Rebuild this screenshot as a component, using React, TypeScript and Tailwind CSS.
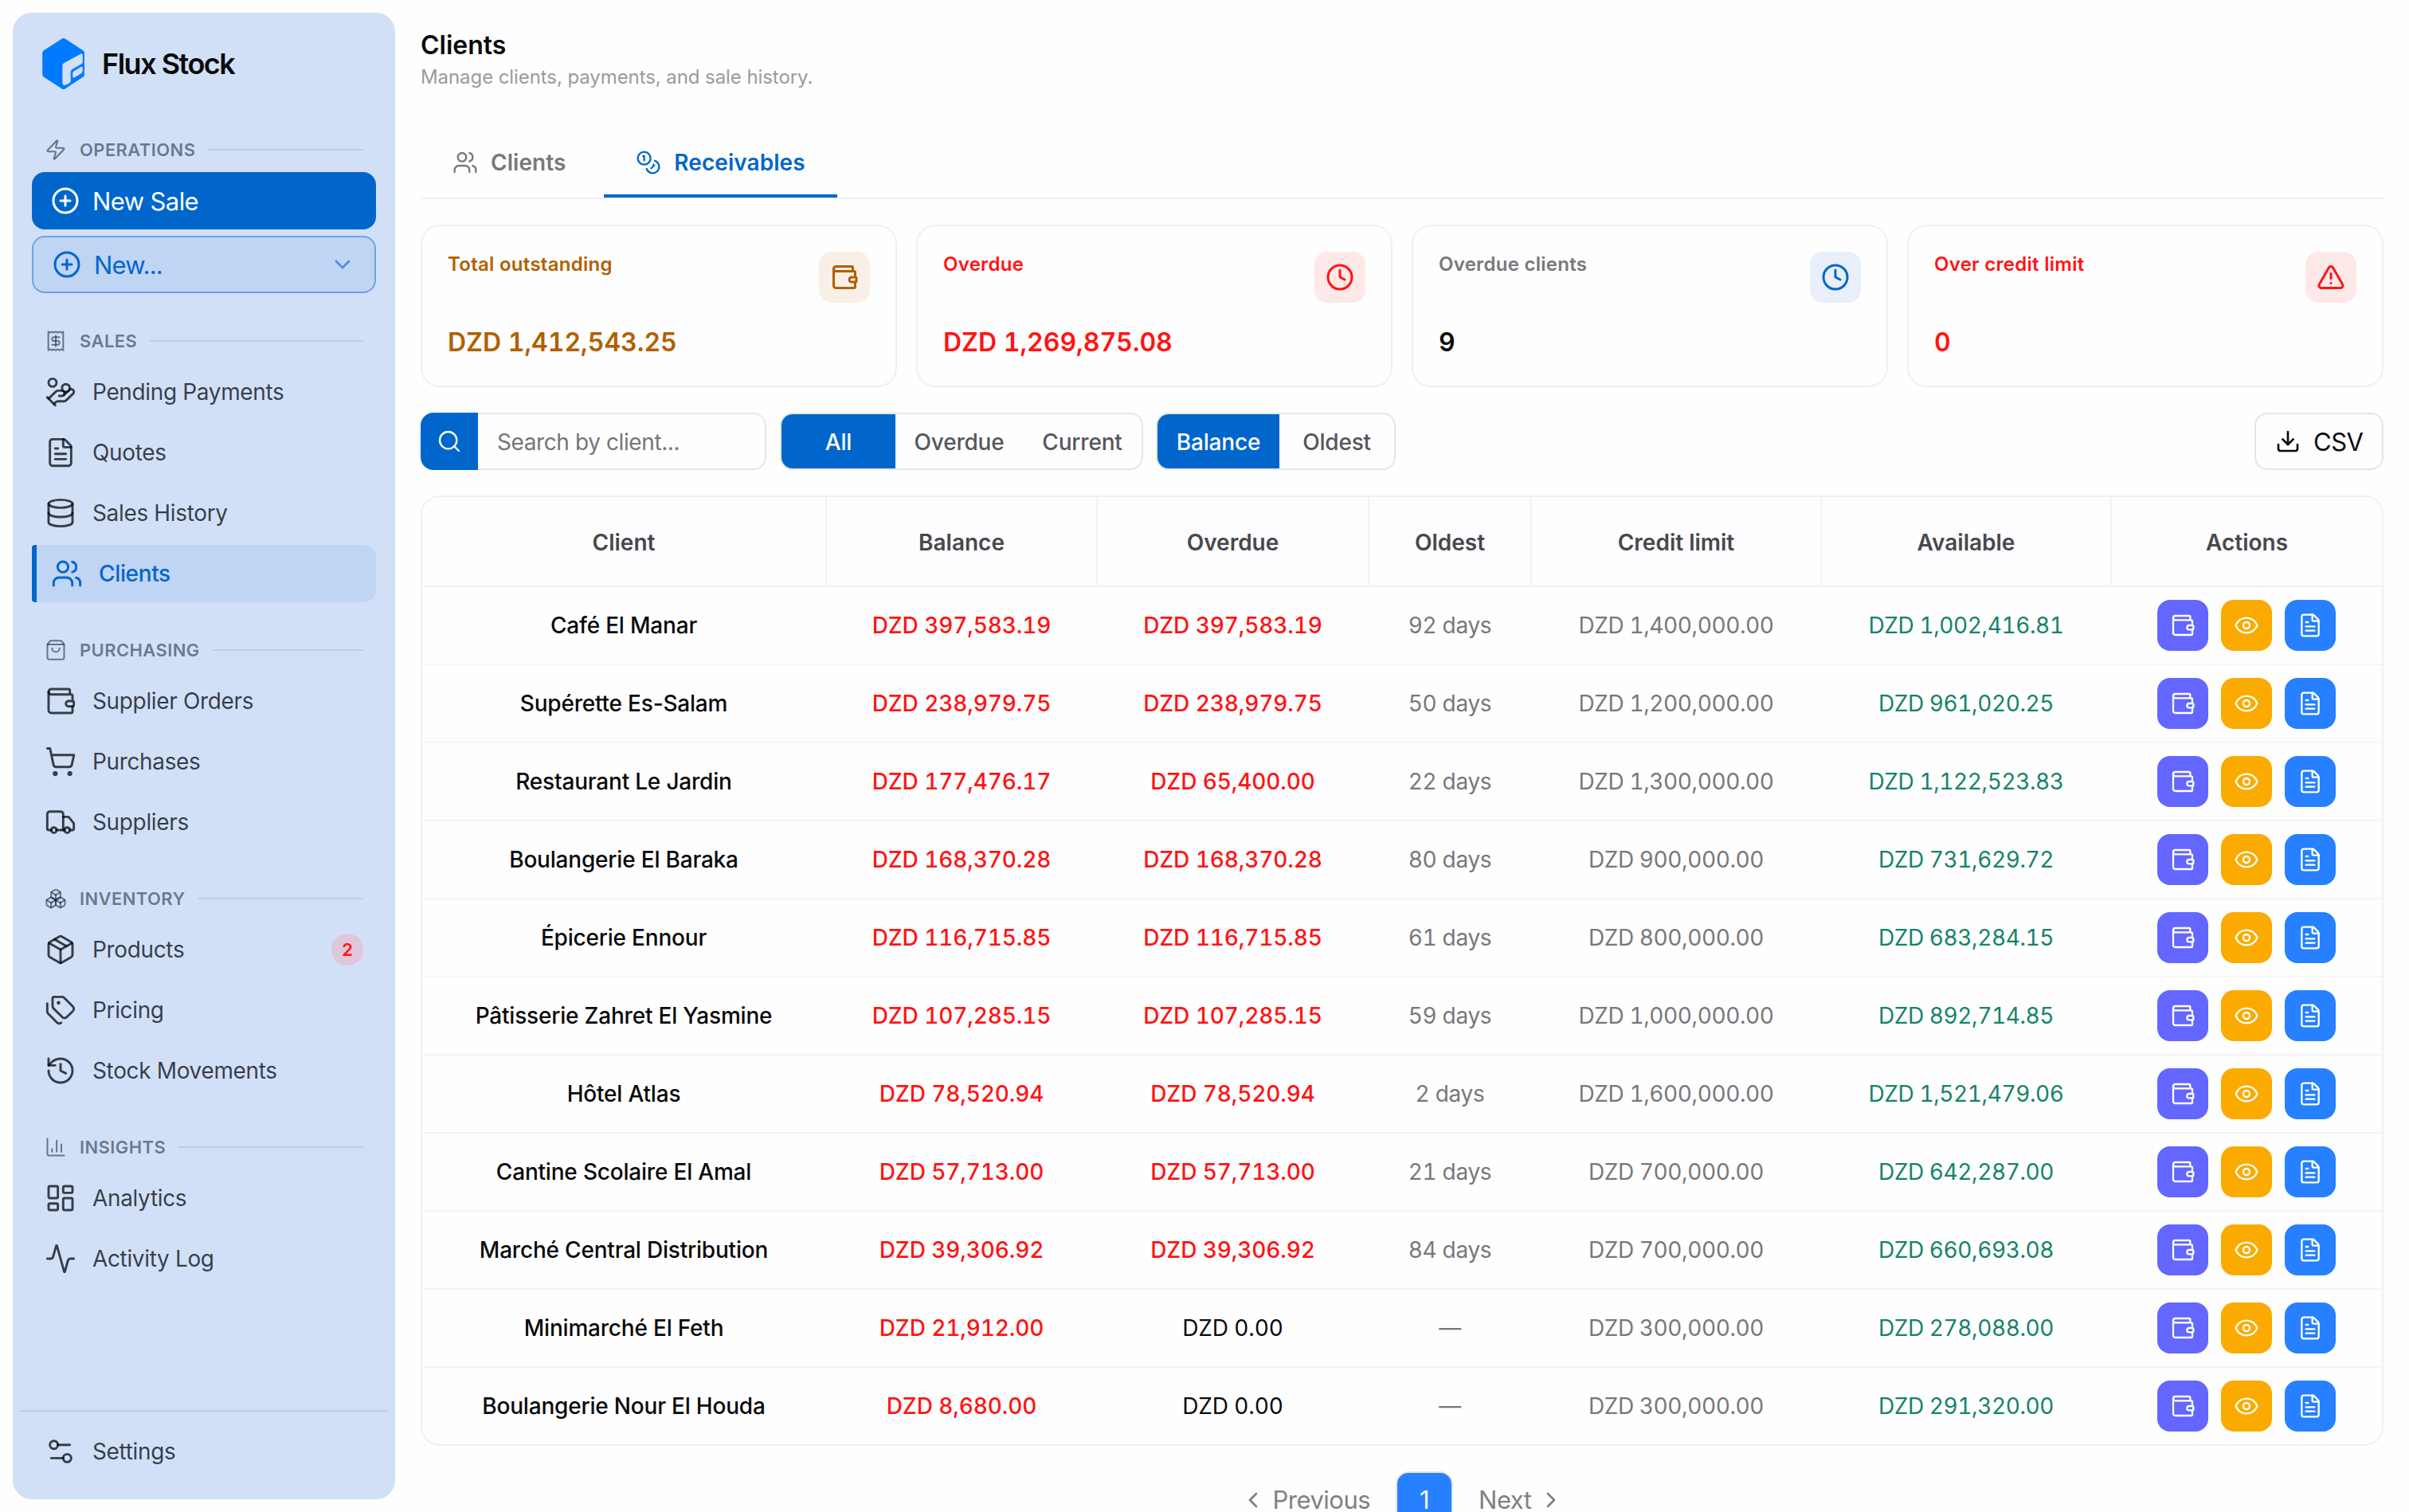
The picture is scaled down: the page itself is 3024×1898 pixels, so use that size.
import type { ReactNode } from "react";
import {
  Activity,
  Boxes,
  ChartColumn,
  ChevronDown,
  ChevronLeft,
  ChevronRight,
  CirclePlus,
  Clock,
  Coins,
  Database,
  Download,
  Eye,
  FileText,
  HandCoins,
  History,
  LayoutDashboard,
  Package,
  Receipt,
  Search,
  Settings2,
  ShoppingBag,
  ShoppingCart,
  Tags,
  TriangleAlert,
  Truck,
  Users,
  Wallet,
  Zap,
  type LucideIcon,
} from "lucide-react";
import clsx from "clsx";

type NavItem = { label: string; icon: LucideIcon; active?: boolean; badge?: number };

const sections: { title: string; icon: LucideIcon; items: NavItem[] }[] = [
  {
    title: "SALES",
    icon: Receipt,
    items: [
      { label: "Pending Payments", icon: HandCoins },
      { label: "Quotes", icon: FileText },
      { label: "Sales History", icon: Database },
      { label: "Clients", icon: Users, active: true },
    ],
  },
  {
    title: "PURCHASING",
    icon: ShoppingBag,
    items: [
      { label: "Supplier Orders", icon: Wallet },
      { label: "Purchases", icon: ShoppingCart },
      { label: "Suppliers", icon: Truck },
    ],
  },
  {
    title: "INVENTORY",
    icon: Boxes,
    items: [
      { label: "Products", icon: Package, badge: 2 },
      { label: "Pricing", icon: Tags },
      { label: "Stock Movements", icon: History },
    ],
  },
  {
    title: "INSIGHTS",
    icon: ChartColumn,
    items: [
      { label: "Analytics", icon: LayoutDashboard },
      { label: "Activity Log", icon: Activity },
    ],
  },
];

const stats = [
  {
    label: "Total outstanding",
    value: "DZD 1,412,543.25",
    icon: Wallet,
    labelClass: "text-[#b06000]",
    valueClass: "text-[#b06000]",
    iconClass: "bg-[#f8efe6] text-[#b06000]",
  },
  {
    label: "Overdue",
    value: "DZD 1,269,875.08",
    icon: Clock,
    labelClass: "text-[#ff1414]",
    valueClass: "text-[#ff1414]",
    iconClass: "bg-[#ffe8e8] text-[#ff1414]",
  },
  {
    label: "Overdue clients",
    value: "9",
    icon: Clock,
    labelClass: "text-[#78787b]",
    valueClass: "text-[#0a0a0b]",
    iconClass: "bg-[#e8effb] text-[#0066cc]",
  },
  {
    label: "Over credit limit",
    value: "0",
    icon: TriangleAlert,
    labelClass: "text-[#ff1414]",
    valueClass: "text-[#ff1414]",
    iconClass: "bg-[#ffe8e8] text-[#ff1414]",
  },
];

const columns = ["Client", "Balance", "Overdue", "Oldest", "Credit limit", "Available", "Actions"];

const rows = [
  ["Café El Manar", "397,583.19", "397,583.19", "92 days", "1,400,000.00", "1,002,416.81"],
  ["Supérette Es-Salam", "238,979.75", "238,979.75", "50 days", "1,200,000.00", "961,020.25"],
  ["Restaurant Le Jardin", "177,476.17", "65,400.00", "22 days", "1,300,000.00", "1,122,523.83"],
  ["Boulangerie El Baraka", "168,370.28", "168,370.28", "80 days", "900,000.00", "731,629.72"],
  ["Épicerie Ennour", "116,715.85", "116,715.85", "61 days", "800,000.00", "683,284.15"],
  ["Pâtisserie Zahret El Yasmine", "107,285.15", "107,285.15", "59 days", "1,000,000.00", "892,714.85"],
  ["Hôtel Atlas", "78,520.94", "78,520.94", "2 days", "1,600,000.00", "1,521,479.06"],
  ["Cantine Scolaire El Amal", "57,713.00", "57,713.00", "21 days", "700,000.00", "642,287.00"],
  ["Marché Central Distribution", "39,306.92", "39,306.92", "84 days", "700,000.00", "660,693.08"],
  ["Minimarché El Feth", "21,912.00", "0.00", "—", "300,000.00", "278,088.00"],
  ["Boulangerie Nour El Houda", "8,680.00", "0.00", "—", "300,000.00", "291,320.00"],
];

const gridCols = "grid grid-cols-[508px_340px_341px_204px_364px_364px_339px]";

function Logo() {
  return (
    <svg width="54" height="64" viewBox="0 0 54 64" fill="none">
      <path
        d="M24.800.6a3.600 3.600 0 0 1 3.800 0l22.900 14.800a3.200 3.200 0 0 1 1.500 2.700v27.800a3.200 3.200 0 0 1-1.500 2.700L28.600 63.400a3.600 3.600 0 0 1-3.800 0L1.700 48.600A3.200 3.200 0 0 1 .2 45.900V18.100a3.200 3.200 0 0 1 1.500-2.700Z"
        fill="#007bff"
      />
      <path
        d="M27.500 31 47.800 19.900c1.700-.9 3-.1 3 1.600v8.300c0 1-.5 1.900-1.400 2.400L37.600 38.900c-1.300.8-1.900 1.900-1.900 3.300V53.500c0 1-.5 1.900-1.300 2.400l-4.100 2.400c-2.600 1.500-4.900.6-4.900-2V34.700c0-1.600.7-2.900 2.100-3.700Z"
        fill="#d2e0f7"
      />
      <path
        d="m39.600 41.400 8.700-5.200c1.400-.8 2.400-.3 2.400 1.200v3.900c0 1-.5 1.900-1.300 2.400l-8.600 5.300c-1.400.9-2.500.2-2.500-1.200v-3.900c0-1.100.4-1.900 1.300-2.500Z"
        fill="#d2e0f7"
      />
    </svg>
  );
}

function SectionTitle({ title, icon: Icon }: { title: string; icon: LucideIcon }) {
  return (
    <div className="mb-3 flex h-8 items-center px-4 text-[#101d30]/55">
      <Icon size={28} strokeWidth={1.75} />
      <span className="ml-4 text-[22px] font-semibold tracking-[0.4px]">{title}</span>
      <span className="ml-4 h-0.5 flex-1 bg-[#bfcde4]" />
    </div>
  );
}

function NavLink({ label, icon: Icon, active, badge }: NavItem) {
  return (
    <a
      className={clsx(
        "flex h-[72px] items-center gap-5 pr-4 text-[28px] tracking-[-0.35px]",
        active
          ? "rounded-r-2xl rounded-l-[4px] border-l-[6px] border-[#0066cc] bg-[#c0d4f3] pl-[18px] font-medium text-[#0066cc]"
          : "pl-4 text-[#03070d]/75",
      )}
    >
      <Icon size={40} strokeWidth={1.75} />
      <span className="flex-1">{label}</span>
      {badge && (
        <span className="flex size-10 items-center justify-center rounded-full bg-[#dfc6d8] text-[22px] font-semibold text-[#ff1414]">
          {badge}
        </span>
      )}
    </a>
  );
}

function Sidebar() {
  return (
    <aside className="m-4 flex h-[1866px] w-[480px] shrink-0 flex-col rounded-3xl bg-[#d2e0f7]">
      <div className="flex h-[156px] items-start pt-8 pl-[37px]">
        <Logo />
        <span className="mt-[5px] ml-[21px] text-[36px] font-semibold tracking-[-1.5px] text-[#0a0a0b]">
          Flux Stock
        </span>
      </div>
      <nav className="flex flex-1 flex-col gap-11 px-6">
        <div>
          <SectionTitle title="OPERATIONS" icon={Zap} />
          <button className="flex h-[72px] w-full items-center gap-4 rounded-2xl bg-[#0066cc] px-6 text-[31px] tracking-[-0.6px] text-white">
            <CirclePlus size={36} />
            <span className="pt-0.5">New Sale</span>
          </button>
          <button className="mt-2 flex h-[72px] w-full items-center gap-4 rounded-2xl border-2 border-[#6ba4e4] bg-[#c0d4f3] px-6 text-[31px] tracking-[-0.8px] text-[#0066cc]">
            <CirclePlus size={36} />
            <span className="flex-1 pt-0.5 text-left">New...</span>
            <ChevronDown size={32} className="text-[#4d90dd]" />
          </button>
        </div>
        {sections.map((section) => (
          <div key={section.title}>
            <SectionTitle title={section.title} icon={section.icon} />
            <div className="flex flex-col gap-1">
              {section.items.map((item) => (
                <NavLink key={item.label} {...item} />
              ))}
            </div>
          </div>
        ))}
      </nav>
      <div className="mx-2 border-t-2 border-[#bfcde4] px-4 pt-[14px] pb-6">
        <NavLink label="Settings" icon={Settings2} />
      </div>
    </aside>
  );
}

function Tab({ icon: Icon, label, active }: { icon: LucideIcon; label: string; active?: boolean }) {
  return (
    <button
      className={clsx(
        "flex h-[88px] items-center gap-4 border-b-4 px-10 pt-1 text-[28px] font-semibold tracking-[0.05px]",
        active ? "border-[#0066cc] text-[#0066cc]" : "border-transparent text-[#78787b]",
      )}
    >
      <Icon size={32} strokeWidth={1.75} />
      {label}
    </button>
  );
}

function Segment({ children, active, className }: { children: ReactNode; active?: boolean; className?: string }) {
  return (
    <button
      className={clsx(
        "flex h-full items-center justify-center pt-0.5 text-[28px] font-medium tracking-[-0.2px]",
        active ? "bg-[#0066cc] text-white" : "text-[#56565a]",
        className,
      )}
    >
      {children}
    </button>
  );
}

function Toolbar() {
  return (
    <div className="mt-8 flex h-[72px] shrink-0 items-center">
      <div className="flex h-full w-[434px] overflow-hidden rounded-2xl">
        <span className="flex w-[72px] items-center justify-center bg-[#0066cc] text-white">
          <Search size={32} strokeWidth={1.75} />
        </span>
        <span className="flex flex-1 items-center rounded-r-2xl border-2 border-l-0 border-[#e5e5e8] pt-0.5 pl-6 text-[28px] tracking-[-0.4px] text-[#757578]">
          Search by client...
        </span>
      </div>
      <div className="ml-[17px] flex h-full overflow-hidden rounded-2xl border-2 border-[#e5e5e8]">
        <Segment active className="w-[143px]">All</Segment>
        <Segment className="w-[160px]">Overdue</Segment>
        <Segment className="w-[149px]">Current</Segment>
      </div>
      <div className="ml-4 flex h-full overflow-hidden rounded-2xl border-2 border-[#e5e5e8]">
        <Segment active className="w-[153px]">Balance</Segment>
        <Segment className="w-[144px]">Oldest</Segment>
      </div>
      <button className="ml-auto flex h-full w-[162px] items-center gap-4 rounded-2xl border-2 border-[#e5e5e8] pl-6 text-[31px] tracking-[-0.5px] text-[#0a0a0b]">
        <Download size={32} />
        <span className="pt-0.5">CSV</span>
      </button>
    </div>
  );
}

function ReceivablesTable() {
  return (
    <div className="mt-8 shrink-0 overflow-hidden rounded-3xl border-2 border-[#f0eff2] text-[28px]">
      <div className={clsx(gridCols, "h-[113px] border-b-2 border-[#f0eff2] bg-[#fdfcfe] font-semibold text-[#48484b]")}>
        {columns.map((column) => (
          <div key={column} className="flex items-center justify-center border-r-2 border-[#f3f2f5] pt-0.5 last:border-r-0">
            {column}
          </div>
        ))}
      </div>
      {rows.map(([client, balance, overdue, oldest, limit, available]) => (
        <div
          key={client}
          className={clsx(
            gridCols,
            "h-[98px] items-center border-b-2 border-[#f5f4f7] text-center *:pr-0.5 last:h-24 last:border-b-0",
          )}
        >
          <span className="font-medium tracking-[-0.2px] text-[#0a0a0b]">{client}</span>
          <span className="font-medium tracking-[-0.1px] text-[#ff1414] tabular-nums">DZD {balance}</span>
          <span
            className={clsx(
              "tracking-[-0.1px] tabular-nums",
              overdue === "0.00" ? "text-[#0a0a0b]" : "font-medium text-[#ff1414]",
            )}
          >
            DZD {overdue}
          </span>
          <span className="tracking-[-0.3px] text-[#78787b] tabular-nums">{oldest}</span>
          <span className="tracking-[-0.4px] text-[#78787b] tabular-nums">DZD {limit}</span>
          <span className="tracking-[-0.4px] text-[#15836a] tabular-nums">DZD {available}</span>
          <span className="flex gap-4 pl-[57px] text-white">
            <button className="flex size-16 items-center justify-center rounded-2xl bg-[#6366ff]">
              <Wallet size={32} strokeWidth={1.75} />
            </button>
            <button className="flex size-16 items-center justify-center rounded-2xl bg-[#fbab00]">
              <Eye size={32} strokeWidth={1.75} />
            </button>
            <button className="flex size-16 items-center justify-center rounded-2xl bg-[#2680ff]">
              <FileText size={32} strokeWidth={1.75} />
            </button>
          </span>
        </div>
      ))}
    </div>
  );
}

export default function App() {
  return (
    <div className="flex h-[1898px] w-[3024px] overflow-hidden bg-[#fefefe] font-['Inter',sans-serif]">
      <Sidebar />
      <main className="ml-4 flex w-[2464px] flex-col">
        <h1 className="mt-9 text-[32px] leading-[42px] font-semibold text-[#0a0a0b]">Clients</h1>
        <p className="pt-px text-[24px] leading-[36px] tracking-[-0.08px] text-[#9a9a9d]">
          Manage clients, payments, and sale history.
        </p>
        <div className="mt-[45px] flex gap-2 border-b-2 border-[#f0eff2]">
          <Tab icon={Users} label="Clients" />
          <Tab icon={Coins} label="Receivables" active />
        </div>
        <div className="mt-8 grid grid-cols-4 gap-6">
          {stats.map(({ label, value, icon: Icon, labelClass, valueClass, iconClass }) => (
            <div key={label} className="flex h-[204px] flex-col justify-between rounded-3xl border-2 border-[#f0eff2] px-8 pt-8 pb-[31px]">
              <div className="flex items-start justify-between">
                <span className={clsx("text-[24px] leading-8 font-semibold tracking-[0.28px]", labelClass)}>{label}</span>
                <span className={clsx("flex size-16 items-center justify-center rounded-2xl", iconClass)}>
                  <Icon size={36} />
                </span>
              </div>
              <span className={clsx("text-[32px] leading-[46px] font-semibold tabular-nums", valueClass)}>{value}</span>
            </div>
          ))}
        </div>
        <Toolbar />
        <ReceivablesTable />
        <div className="mt-8 flex h-[72px] shrink-0 items-center justify-center text-[31px] tracking-[-0.5px] text-[#808084]">
          <ChevronLeft size={32} />
          <span className="ml-2">Previous</span>
          <span className="mx-8 flex h-full w-[72px] items-center justify-center rounded-2xl border-2 border-[#e5e5e8] bg-[#2680ff] text-white">
            1
          </span>
          <span className="mr-2">Next</span>
          <ChevronRight size={32} />
        </div>
      </main>
    </div>
  );
}
